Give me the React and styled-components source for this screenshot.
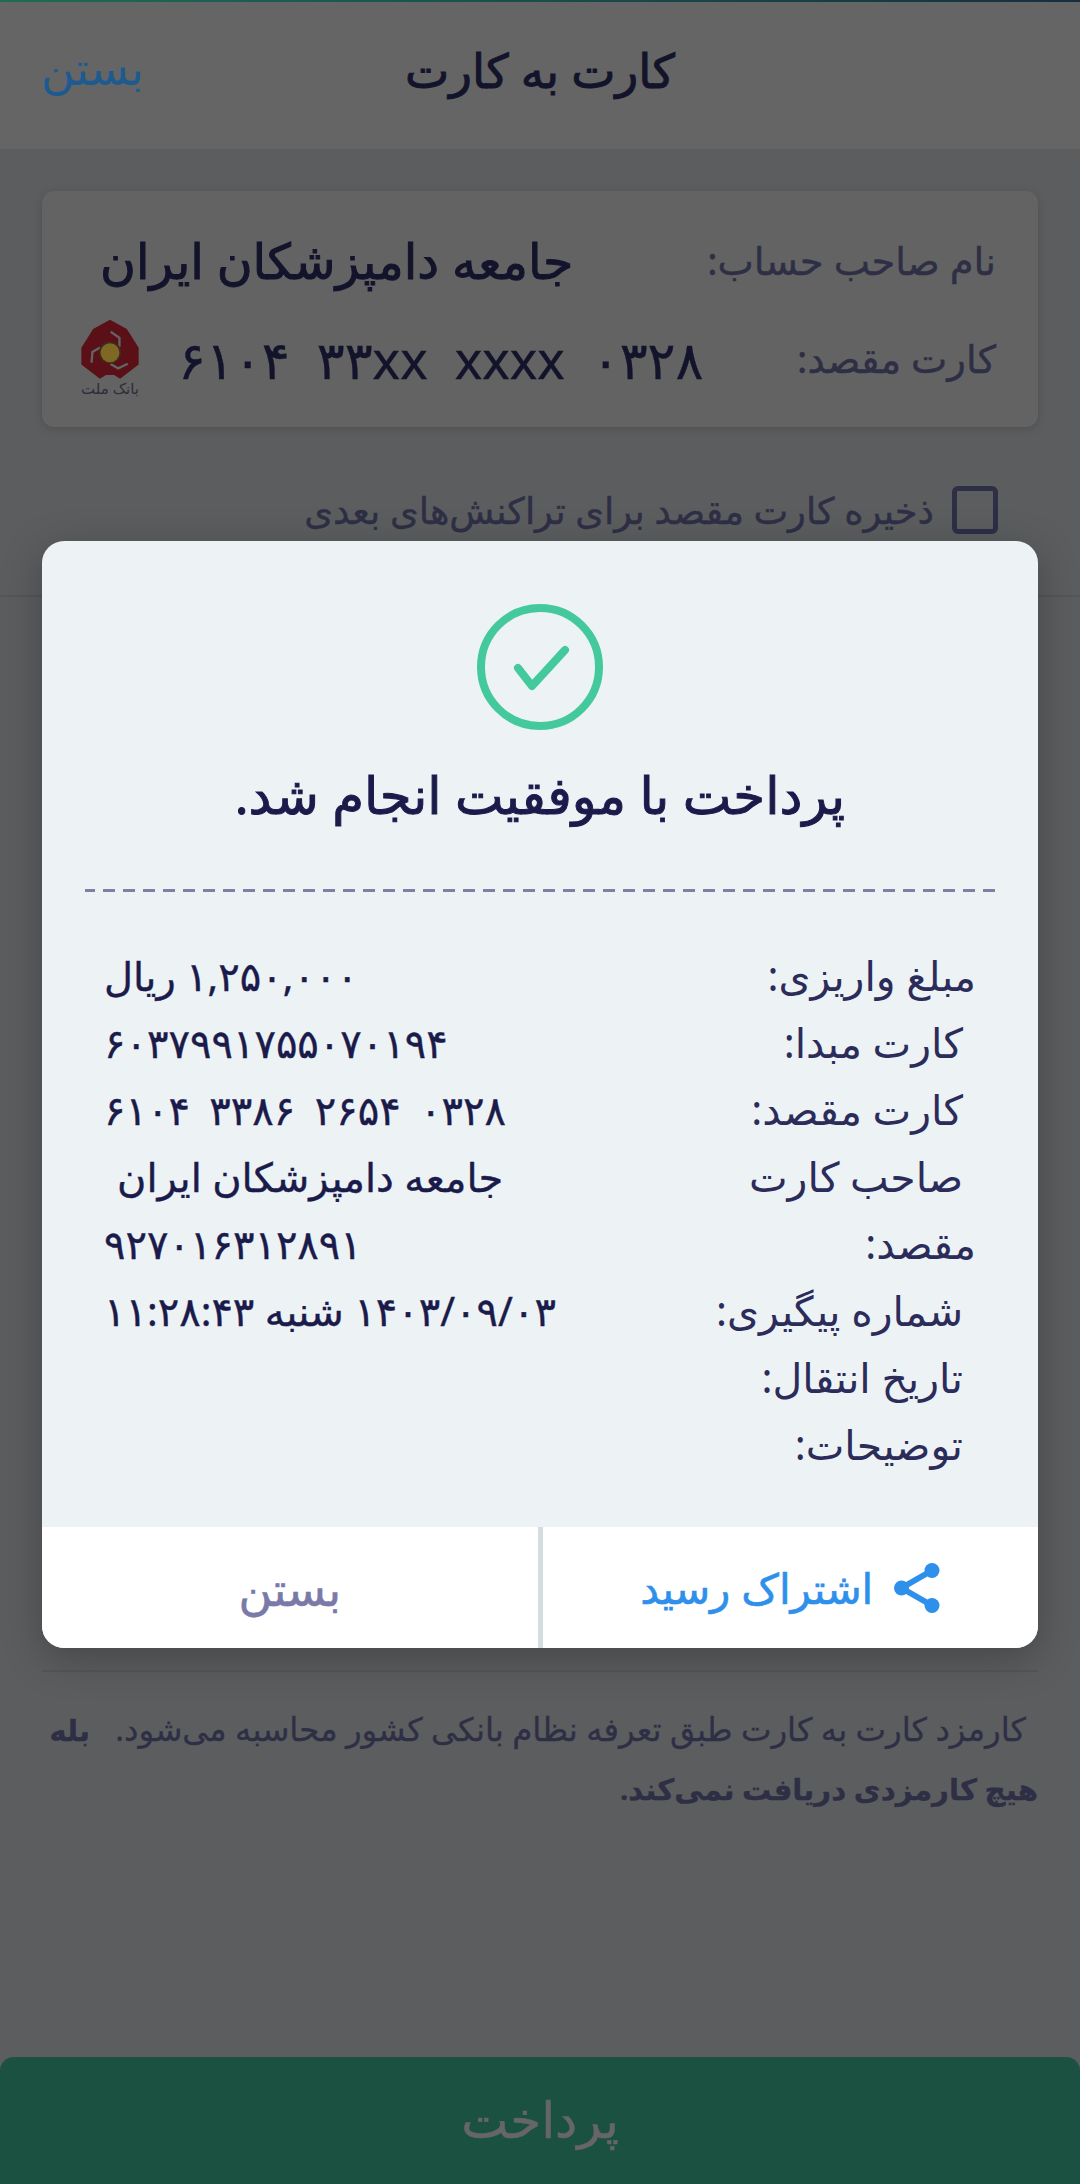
import React from "react";
import styled, { createGlobalStyle } from "styled-components";

const FONT = `"Noto Sans", "DejaVu Sans", sans-serif`;

const GlobalStyle = createGlobalStyle`
    html, body {
        margin: 0;
        padding: 0;
        background: #5c5d5f;
    }
    * {
        box-sizing: border-box;
    }
`;

const Page = styled.div`
    position: relative;
    width: 1080px;
    height: 2184px;
    overflow: hidden;
    display: flex;
    flex-direction: column;
    background: #5c5d5f;
    font-family: ${FONT};
    direction: rtl;
`;

const TopStripe = styled.div`
    height: 2px;
    background: linear-gradient(to right, #1f6b55, #14303f);
`;

const Header = styled.header`
    height: 147px;
    padding: 0 41px 12px;
    display: grid;
    grid-template-columns: 1fr auto 1fr;
    align-items: center;
    background: #656565;
`;

const Title = styled.h1`
    grid-column: 2;
    margin: 0;
    font-size: 47px;
    font-weight: 400;
    -webkit-text-stroke: 1px #13142b;
    color: #13142b;
`;

const HeaderClose = styled.span`
    justify-self: end;
    margin-bottom: 6px;
    font-size: 46px;
    color: #1c5a90;
`;

const Body = styled.main`
    flex: 1;
    display: flex;
    flex-direction: column;
    padding: 42px 42px 0;
`;

const Card = styled.section`
    height: 236px;
    padding: 36px 42px 30px 38px;
    display: flex;
    flex-direction: column;
    justify-content: space-between;
    background: #636363;
    border-radius: 12px;
    box-shadow: 0 2px 8px rgba(0, 0, 0, 0.15);
`;

const CardRow = styled.div`
    display: flex;
    align-items: center;
    justify-content: space-between;
`;

const CardLabel = styled.span`
    font-size: 38.5px;
    -webkit-text-stroke: 0.4px #2e2f45;
    color: #2e2f45;
`;

const CardName = styled.span`
    margin-left: 20px;
    font-size: 49px;
    font-weight: 400;
    -webkit-text-stroke: 1px #13142b;
    color: #13142b;
`;

const CardNumber = styled.div`
    display: flex;
    align-items: center;
    gap: 38px;
`;

const Digits = styled.span`
    direction: ltr;
    white-space: pre;
    font-size: 52px;
    -webkit-text-stroke: 0.4px #13142b;
    color: #13142b;
`;

const Bank = styled.div`
    width: 60px;
    display: flex;
    flex-direction: column;
    align-items: center;
`;

const BankName = styled.span`
    font-size: 15px;
    line-height: 18px;
    white-space: nowrap;
    color: #2c2d38;
`;

const SaveRow = styled.label`
    margin-top: 58px;
    padding: 0 40px;
    display: flex;
    align-items: center;
    gap: 18px;
    font-size: 36.8px;
    -webkit-text-stroke: 0.4px #2e2f45;
    color: #2e2f45;
`;

const Box = styled.span`
    width: 46px;
    height: 48px;
    border: 5px solid #2e2f45;
    border-radius: 6px;
`;

const Rule = styled.hr`
    margin: ${(p) => p.$top}px ${(p) => (p.$bleed ? -42 : 0)}px 0;
    border: 0;
    height: 2px;
    background: #555658;
`;

const Note = styled.p`
    margin: 28px 0 0;
    font-size: 32.4px;
    line-height: 57px;
    -webkit-text-stroke: 0.3px #2e2f45;
    color: #2e2f45;
    text-indent: 12px;
    b {
        font-size: 29.3px;
        font-weight: 700;
    }
`;

const PayButton = styled.button`
    margin: auto -42px 0;
    height: 127px;
    padding-bottom: 4px;
    border: 0;
    border-radius: 14px 14px 0 0;
    background: #1b5140;
    color: #666666;
    font-family: ${FONT};
    font-size: 50px;
    -webkit-text-stroke: 0.5px #666666;
`;

const Dialog = styled.div`
    position: absolute;
    left: 42px;
    top: 541px;
    width: 996px;
    height: 1107px;
    display: flex;
    flex-direction: column;
    border-radius: 22px;
    overflow: hidden;
    background: #edf2f5;
    box-shadow: 0 10px 40px rgba(0, 0, 0, 0.25);
`;

const DialogTop = styled.div`
    flex: 1;
    display: flex;
    flex-direction: column;
    align-items: center;
    padding-top: 63px;
`;

const DialogTitle = styled.h2`
    margin: 29px 0 0;
    font-size: 51.5px;
    font-weight: 400;
    -webkit-text-stroke: 1px #1a1b4b;
    color: #1a1b4b;
`;

const Dashed = styled.div`
    width: 910px;
    margin-top: 60px;
    height: 3px;
    background: repeating-linear-gradient(to left, #7f80a6 0 12px, transparent 12px 20px);
`;

const Details = styled.div`
    width: 100%;
    margin-top: 50px;
    padding: 0 62px;
    display: flex;
    justify-content: space-between;
`;

const Labels = styled.div`
    width: 340px;
    display: flex;
    flex-direction: column;
`;

const Label = styled.span`
    height: 67px;
    line-height: 67px;
    padding-right: ${(p) => (p.$inset ? 13 : 0)}px;
    font-size: 41px;
    color: #2b2c5a;
`;

const Values = styled.div`
    display: flex;
    flex-direction: column;
    align-items: flex-end;
`;

const Value = styled.span`
    height: 67px;
    line-height: 67px;
    padding-left: ${(p) => p.$inset || 0}px;
    direction: ${(p) => (p.$ltr ? "ltr" : "rtl")};
    font-size: 40px;
    word-spacing: ${(p) => (p.$ltr ? 9 : 0)}px;
    -webkit-text-stroke: 0.4px #1a1b4b;
    white-space: nowrap;
    color: #1a1b4b;
`;

const Footer = styled.div`
    height: 121px;
    display: flex;
    background: #ffffff;
`;

const FooterButton = styled.button`
    flex: 1;
    display: flex;
    align-items: center;
    justify-content: center;
    gap: 21px;
    border: 0;
    background: transparent;
    font-family: ${FONT};
    font-size: ${(p) => (p.$primary ? 42 : 46)}px;
    color: ${(p) => (p.$primary ? "#2e90ea" : "#7a7aa8")};
    -webkit-text-stroke: 0.6px ${(p) => (p.$primary ? "#2e90ea" : "#7a7aa8")};
    & + & {
        border-right: 5px solid #d3dcde;
    }
`;

function BankLogo() {
    const gap = "M2 -62 L28 -44 L28 -18";
    return (
        <svg width="60" height="60" viewBox="-88 -100 176 178">
            <path
                d="M0 -98 L50 -70 L85 -15 L85 35 L30 77 L12 66 L-12 66 L-30 77 L-85 35 L-85 -15 L-50 -70 Z"
                fill="#5a1016"
            />
            {[0, 120, 240].map((a) => (
                <path
                    key={a}
                    d={gap}
                    transform={`rotate(${a})`}
                    fill="none"
                    stroke="#636363"
                    strokeWidth="7"
                />
            ))}
            <circle cx="0" cy="0" r="33" fill="#3f2a1c" />
            <circle cx="0" cy="0" r="28" fill="#7f6724" />
        </svg>
    );
}

function SuccessIcon() {
    return (
        <svg width="126" height="126" viewBox="0 0 126 126" fill="none">
            <circle cx="63" cy="63" r="59" stroke="#44c99c" strokeWidth="8" />
            <path
                d="M41 64 L55 82 L88 46"
                stroke="#44c99c"
                strokeWidth="8"
                strokeLinecap="round"
                strokeLinejoin="round"
            />
        </svg>
    );
}

function ShareIcon() {
    return (
        <svg width="46" height="50" viewBox="0 0 46 50" fill="#2e90ea">
            <circle cx="38" cy="7.5" r="7.5" />
            <circle cx="7.5" cy="25" r="7.5" />
            <circle cx="38" cy="42.5" r="7.5" />
            <path d="M38 7.5 L7.5 25 L38 42.5" fill="none" stroke="#2e90ea" strokeWidth="6" />
        </svg>
    );
}

const rows = [
    { label: "مبلغ واریزی:", value: "۱,۲۵۰,۰۰۰ ریال" },
    { label: "کارت مبدا:", inset: true, value: "۶۰۳۷۹۹۱۷۵۵۰۷۰۱۹۴" },
    { label: "کارت مقصد:", inset: true, value: "۶۱۰۴ ۳۳۸۶ ۲۶۵۴ ۰۳۲۸", ltr: true },
    { label: "صاحب کارت", inset: true, value: "جامعه دامپزشکان ایران", valueInset: 13 },
    { label: "مقصد:", value: "۹۲۷۰۱۶۳۱۲۸۹۱" },
    { label: "شماره پیگیری:", inset: true, value: "۱۴۰۳/۰۹/۰۳ شنبه ۱۱:۲۸:۴۳" },
    { label: "تاریخ انتقال:", inset: true },
    { label: "توضیحات:", inset: true },
];

export default function App() {
    return (
        <>
            <GlobalStyle />
            <Page>
                <TopStripe />
                <Header>
                    <Title>کارت به کارت</Title>
                    <HeaderClose>بستن</HeaderClose>
                </Header>
                <Body>
                    <Card>
                        <CardRow>
                            <CardLabel>نام صاحب حساب:</CardLabel>
                            <CardName>جامعه دامپزشکان ایران</CardName>
                        </CardRow>
                        <CardRow>
                            <CardLabel>کارت مقصد:</CardLabel>
                            <CardNumber>
                                <Digits>{"۶۱۰۴  ۳۳xx  xxxx  ۰۳۲۸"}</Digits>
                                <Bank>
                                    <BankLogo />
                                    <BankName>بانک ملت</BankName>
                                </Bank>
                            </CardNumber>
                        </CardRow>
                    </Card>
                    <SaveRow>
                        <Box />
                        ذخیره کارت مقصد برای تراکنش‌های بعدی
                    </SaveRow>
                    <Rule $top={60} $bleed />
                    <Rule $top={1073} />
                    <Note>
                        کارمزد کارت به کارت طبق تعرفه نظام بانکی کشور محاسبه می‌شود.{"\u00a0\u00a0 "}
                        <b>بله هیچ کارمزدی دریافت نمی‌کند.</b>
                    </Note>
                    <PayButton>پرداخت</PayButton>
                </Body>
                <Dialog>
                    <DialogTop>
                        <SuccessIcon />
                        <DialogTitle>پرداخت با موفقیت انجام شد.</DialogTitle>
                        <Dashed />
                        <Details>
                            <Labels>
                                {rows.map((r) => (
                                    <Label key={r.label} $inset={r.inset}>
                                        {r.label}
                                    </Label>
                                ))}
                            </Labels>
                            <Values>
                                {rows
                                    .filter((r) => r.value)
                                    .map((r) => (
                                        <Value key={r.label} $inset={r.valueInset} $ltr={r.ltr}>
                                            {r.value}
                                        </Value>
                                    ))}
                            </Values>
                        </Details>
                    </DialogTop>
                    <Footer>
                        <FooterButton $primary>
                            <ShareIcon />
                            اشتراک رسید
                        </FooterButton>
                        <FooterButton>بستن</FooterButton>
                    </Footer>
                </Dialog>
            </Page>
        </>
    );
}
